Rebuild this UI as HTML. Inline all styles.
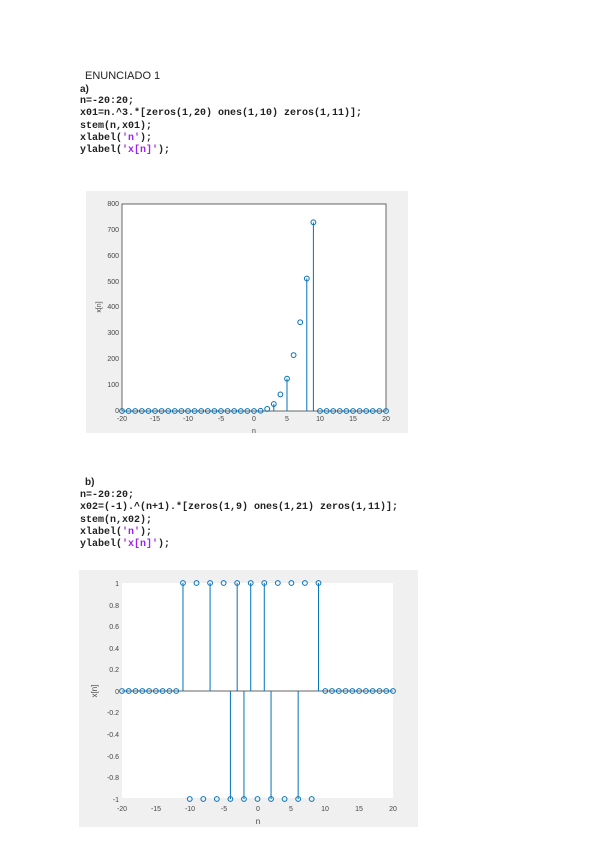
<!DOCTYPE html>
<html><head><meta charset="utf-8"><style>
body{margin:0;width:600px;height:848px;background:#fff;position:relative;overflow:hidden;font-family:"Liberation Sans",sans-serif}
.t{position:absolute;font-size:11px;color:#222}
.c{position:absolute;left:80px;font-family:"Liberation Mono",monospace;font-size:10px;font-weight:bold;color:#222;white-space:pre;line-height:12.3px}
.p{color:#a020f0}
svg{position:absolute;left:0;top:0}
svg text{font-family:"Liberation Sans",sans-serif;font-size:7px;fill:#444}
</style></head><body>
<div class="t" style="left:85px;top:70px;">ENUNCIADO 1</div>
<div class="t" style="left:80px;top:84px;font-weight:bold;font-size:10px">a)</div>
<div class="c" style="top:96px">n=-20:20;
x01=n.^3.*[zeros(1,20) ones(1,10) zeros(1,11)];
stem(n,x01);
xlabel(<span class="p">'n'</span>);
ylabel(<span class="p">'x[n]'</span>);</div>
<div class="t" style="left:85px;top:477px;font-weight:bold;font-size:10px">b)</div>
<div class="c" style="top:490px">n=-20:20;
x02=(-1).^(n+1).*[zeros(1,9) ones(1,21) zeros(1,11)];
stem(n,x02);
xlabel(<span class="p">'n'</span>);
ylabel(<span class="p">'x[n]'</span>);</div>

<svg width="600" height="848" id="s">
<rect x="86" y="191" width="322" height="242" fill="#f0f0f0"/>
<rect x="122" y="204" width="264" height="207" fill="#fff" stroke="#444" stroke-width="0.8"/>
<g text-anchor="end">
<text x="119" y="413">0</text><text x="119" y="387">100</text><text x="119" y="361">200</text><text x="119" y="335">300</text><text x="119" y="309">400</text><text x="119" y="284">500</text><text x="119" y="258">600</text><text x="119" y="232">700</text><text x="119" y="206">800</text>
</g>
<g text-anchor="middle">
<text x="122" y="421">-20</text><text x="155" y="421">-15</text><text x="188" y="421">-10</text><text x="221" y="421">-5</text><text x="254" y="421">0</text><text x="287" y="421">5</text><text x="320" y="421">10</text><text x="353" y="421">15</text><text x="386" y="421">20</text>
<text x="254" y="433">n</text>
</g>
<text x="101" y="307" transform="rotate(-90 101 307)" text-anchor="middle">x[n]</text>
<g id="g1" stroke="#0072bd" fill="none" stroke-width="1"></g>

<rect x="79" y="570" width="339" height="257" fill="#f0f0f0"/>
<rect x="122" y="583" width="271" height="215" fill="#fff"/>
<line x1="122" y1="691" x2="393" y2="691" stroke="#333" stroke-width="0.8"/>
<g text-anchor="end">
<text x="119" y="586">1</text><text x="119" y="608">0.8</text><text x="119" y="629">0.6</text><text x="119" y="651">0.4</text><text x="119" y="672">0.2</text><text x="119" y="694">0</text><text x="119" y="715">-0.2</text><text x="119" y="737">-0.4</text><text x="119" y="759">-0.6</text><text x="119" y="780">-0.8</text><text x="119" y="802">-1</text>
</g>
<g text-anchor="middle">
<text x="122" y="811">-20</text><text x="156" y="811">-15</text><text x="190" y="811">-10</text><text x="224" y="811">-5</text><text x="258" y="811">0</text><text x="291" y="811">5</text><text x="325" y="811">10</text><text x="359" y="811">15</text><text x="393" y="811">20</text>
<text x="258" y="824" style="font-size:8px">n</text>
</g>
<text x="97" y="691" transform="rotate(-90 97 691)" text-anchor="middle" style="font-size:8px">x[n]</text>
<g id="g2" stroke="#0072bd" fill="none" stroke-width="1"></g>
</svg>
<script>
var ns="http://www.w3.org/2000/svg";
function el(g,t,a){var e=document.createElementNS(ns,t);for(var k in a)e.setAttribute(k,a[k]);g.appendChild(e);}
var g1=document.getElementById('g1');
for(var n=-20;n<=20;n++){var v=(n>=0&&n<=9)?n*n*n:0;var x=122+(n+20)*6.6,y=411-v*0.2588;
if([3,5,8,9].indexOf(n)>=0)el(g1,'line',{x1:x,y1:411,x2:x,y2:y});
el(g1,'circle',{cx:x,cy:y,r:2.4});}
var g2=document.getElementById('g2');
for(var n=-20;n<=20;n++){var v=(n>=-11&&n<=9)?((n%2===0)?-1:1):0;var x=122+(n+20)*6.775,y=691-v*108;
if([-11,-7,-3,-1,1,9,-4,-2,2,6].indexOf(n)>=0)el(g2,'line',{x1:x,y1:691,x2:x,y2:y});
el(g2,'circle',{cx:x,cy:y,r:2.4});}
</script>
</body></html>
